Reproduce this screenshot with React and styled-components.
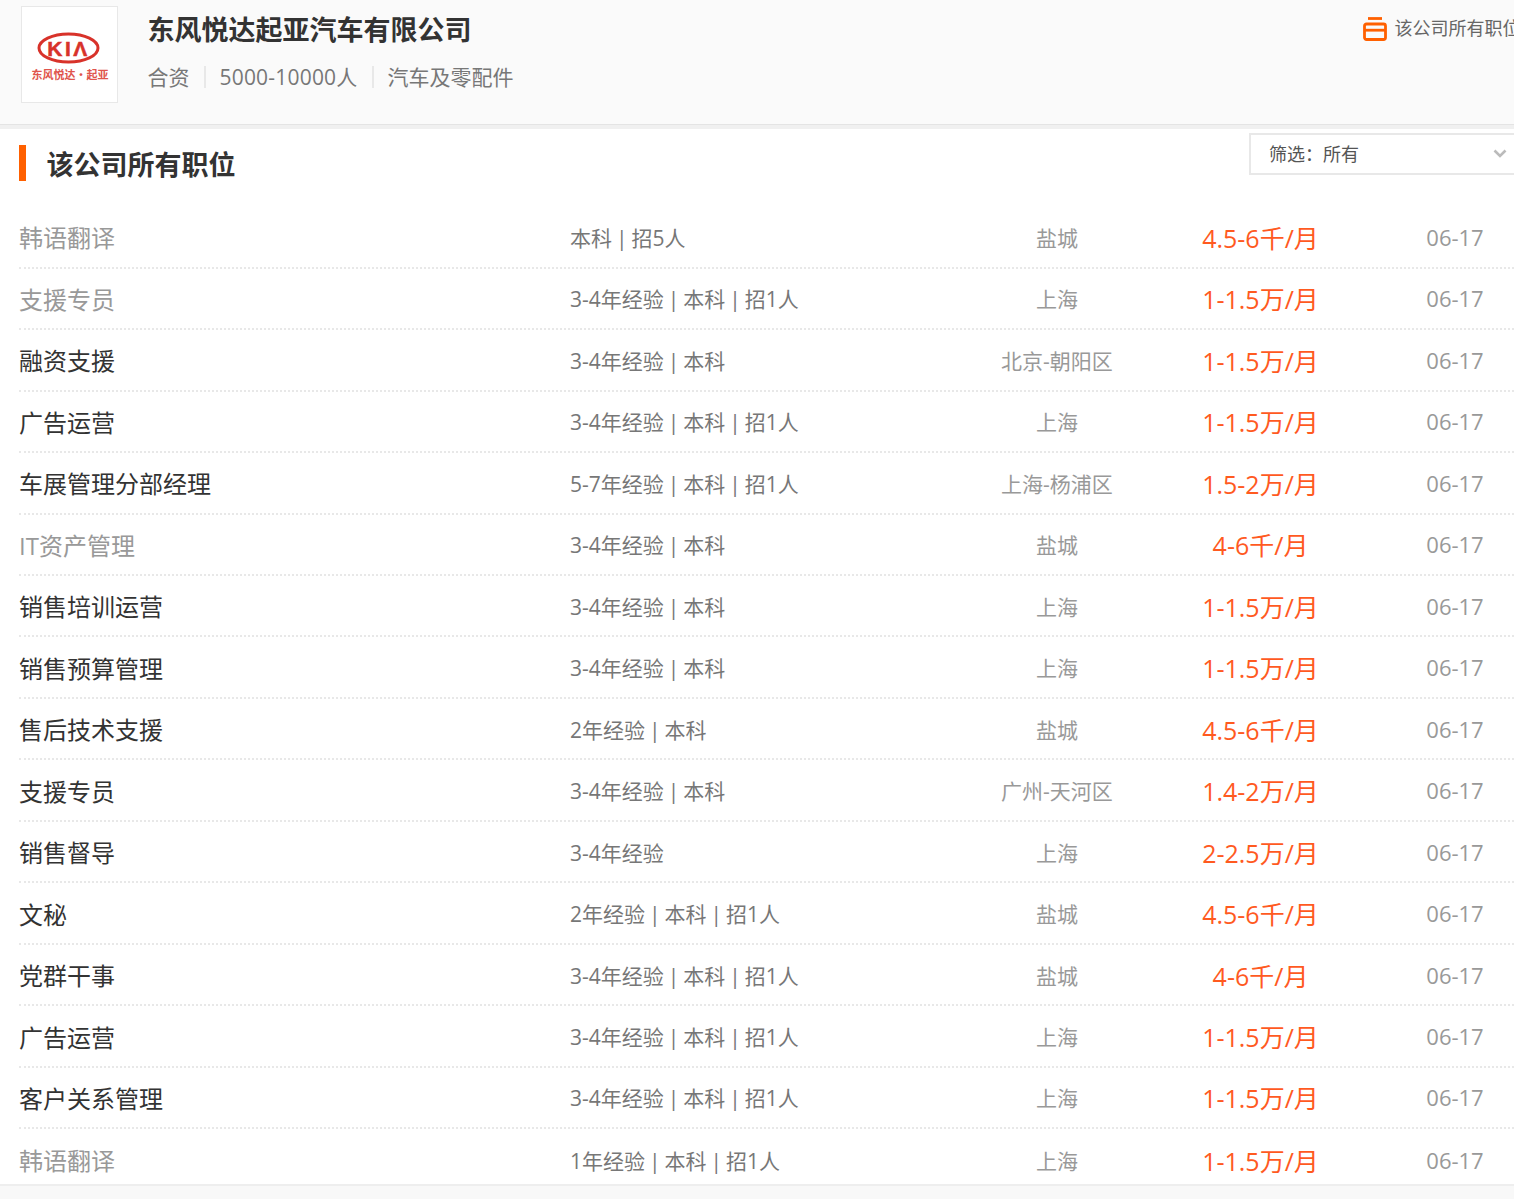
import React from 'react';
import styled, { createGlobalStyle } from 'styled-components';

const Global = createGlobalStyle`
  html, body { margin: 0; padding: 0; background: #f8f8f8; }
  body { font-family: "Open Sans", "Noto Sans CJK SC", sans-serif; overflow: hidden; }
`;
const Page = styled.div`width: 1514px; height: 1199px; overflow: hidden; background: #f8f8f8;`;
const CompanyBar = styled.header`
  height: 129px; box-sizing: border-box; background: #fafafa; border-bottom: 4px solid #f0f0f0; box-shadow: inset 0 -1px 0 #e4e4e4;
  display: flex; padding: 6px 0 0 21px; position: relative;
`;
const LogoBox = styled.div`
  width: 97px; height: 97px; box-sizing: border-box; background: #fff; border: 1px solid #e8e8e8;
  display: flex; align-items: center; justify-content: center;
`;
const CompanyInfo = styled.div`margin-left: 29.5px; display: flex; flex-direction: column;`;
const CompanyName = styled.h1`
  margin: 0; font-size: 27px; line-height: 48px; height: 48px; font-weight: 700; color: #333; white-space: nowrap;
`;
const Facts = styled.div`display: flex; align-items: center; font-size: 21px; line-height: 46px; color: #777;`;
const Fact = styled.span`
  white-space: nowrap;
  letter-spacing: ${p => p.$numeric ? '0.2px' : '0'};
`;
const FactDivider = styled.i`display: block; width: 2px; height: 22px; margin: 0 14px; background: #e8e8e8;`;
const AllJobsLink = styled.div`
  position: absolute; left: 1363px; top: 15px; display: flex; align-items: center; gap: 7.5px;
  font-size: 18px; line-height: 26px; color: #666; white-space: nowrap;
`;
const LinkIcon = styled.svg`margin-bottom: -1px; flex: none;`;
const Main = styled.main`background: #fff; height: 1057px; padding: 0 0 0 19px; border-bottom: 2px solid #eeeeee; box-sizing: border-box;`;
const TitleRow = styled.div`display: flex; height: 78.2px; position: relative;`;
const Title = styled.h2`
  margin: 16px 0 0; height: 36px; border-left: 7px solid #ff6000; padding-left: 20.5px;
  font-size: 27px; line-height: 40px; font-weight: 700; color: #333; white-space: nowrap;
`;
const Filter = styled.div`
  position: absolute; left: 1230px; top: 4px; width: 290px; height: 42px; box-sizing: border-box;
  border: 2px solid #e8e8e8; background: #fff; font-size: 18px; line-height: 38px; padding-left: 18px; color: #555;
`;
const Chevron = styled.svg`position: absolute; left: 242px; top: 14px;`;
const Row = styled.div`
  display: grid; grid-template-columns: 551px 387px 200px 207px 182px; align-items: center;
  height: 61.47px; box-sizing: border-box; width: 1527px;
  border-bottom: 2px dotted #e8e8e8;
  &:last-child { border-bottom: 0; }
`;
const JobName = styled.div`font-size: 24px; color: ${p => p.$seen ? '#999' : '#333'}; white-space: nowrap;`;
const Meta = styled.div`font-size: 21px; word-spacing: -1.5px; color: #777; white-space: nowrap;`;
const City = styled.div`font-size: 21px; color: #999; text-align: center; white-space: nowrap;`;
const Salary = styled.div`font-size: 25px; color: #ff5a1f; text-align: center; white-space: nowrap;`;
const DateCell = styled.div`font-size: 22px; color: #999; text-align: center; white-space: nowrap;`;

const jobs = [
  ['韩语翻译', '本科 | 招5人', '盐城', '4.5-6千/月', 1],
  ['支援专员', '3-4年经验 | 本科 | 招1人', '上海', '1-1.5万/月', 1],
  ['融资支援', '3-4年经验 | 本科', '北京-朝阳区', '1-1.5万/月'],
  ['广告运营', '3-4年经验 | 本科 | 招1人', '上海', '1-1.5万/月'],
  ['车展管理分部经理', '5-7年经验 | 本科 | 招1人', '上海-杨浦区', '1.5-2万/月'],
  ['IT资产管理', '3-4年经验 | 本科', '盐城', '4-6千/月', 1],
  ['销售培训运营', '3-4年经验 | 本科', '上海', '1-1.5万/月'],
  ['销售预算管理', '3-4年经验 | 本科', '上海', '1-1.5万/月'],
  ['售后技术支援', '2年经验 | 本科', '盐城', '4.5-6千/月'],
  ['支援专员', '3-4年经验 | 本科', '广州-天河区', '1.4-2万/月'],
  ['销售督导', '3-4年经验', '上海', '2-2.5万/月'],
  ['文秘', '2年经验 | 本科 | 招1人', '盐城', '4.5-6千/月'],
  ['党群干事', '3-4年经验 | 本科 | 招1人', '盐城', '4-6千/月'],
  ['广告运营', '3-4年经验 | 本科 | 招1人', '上海', '1-1.5万/月'],
  ['客户关系管理', '3-4年经验 | 本科 | 招1人', '上海', '1-1.5万/月'],
  ['韩语翻译', '1年经验 | 本科 | 招1人', '上海', '1-1.5万/月', 1],
];

const KiaLogo = () => (
  <svg width="80" height="62" viewBox="1.5 -8 80 62">
    <ellipse cx="40" cy="16" rx="29.5" ry="14" fill="none" stroke="#d8322a" strokeWidth="3" />
    <text x="40" y="24" textAnchor="middle" fontFamily="Liberation Sans, sans-serif" fontWeight="700" fontSize="21" letterSpacing="2.5" stroke="#d8322a" strokeWidth="0.5" fill="#d8322a">KIΛ</text>
    <text x="41.5" y="47" textAnchor="middle" fontFamily="Noto Sans CJK SC, sans-serif" fontWeight="700" fontSize="11" textLength="77" lengthAdjust="spacingAndGlyphs" fill="#e0554d">东风悦达·起亚</text>
  </svg>
);

const BagIcon = () => (
  <LinkIcon width="24" height="25" viewBox="0 0 24 25" fill="none" stroke="#ff6000" strokeWidth="2.8">
    <path d="M5 2.5h14" />
    <rect x="1.5" y="8" width="21" height="15.5" rx="2" />
    <path d="M1.5 14.2h21" />
  </LinkIcon>
);

export default function App() {
  return (
    <Page>
      <Global />
      <CompanyBar>
        <LogoBox><KiaLogo /></LogoBox>
        <CompanyInfo>
          <CompanyName>东风悦达起亚汽车有限公司</CompanyName>
          <Facts>
            <Fact>合资</Fact>
            <FactDivider />
            <Fact $numeric>5000-10000人</Fact>
            <FactDivider />
            <Fact>汽车及零配件</Fact>
          </Facts>
        </CompanyInfo>
        <AllJobsLink><BagIcon />该公司所有职位</AllJobsLink>
      </CompanyBar>
      <Main>
        <TitleRow>
          <Title>该公司所有职位</Title>
          <Filter>
            筛选：所有
            <Chevron width="14" height="9" viewBox="0 0 14 9" fill="none" stroke="#bbb" strokeWidth="2.6"><path d="M1.5 1.5 7 7l5.5-5.5" /></Chevron>
          </Filter>
        </TitleRow>
        {jobs.map((j, i) => (
          <Row key={i}>
            <JobName $seen={!!j[4]}>{j[0]}</JobName>
            <Meta>{j[1]}</Meta>
            <City>{j[2]}</City>
            <Salary>{j[3]}</Salary>
            <DateCell>06-17</DateCell>
          </Row>
        ))}
      </Main>
    </Page>
  );
}
